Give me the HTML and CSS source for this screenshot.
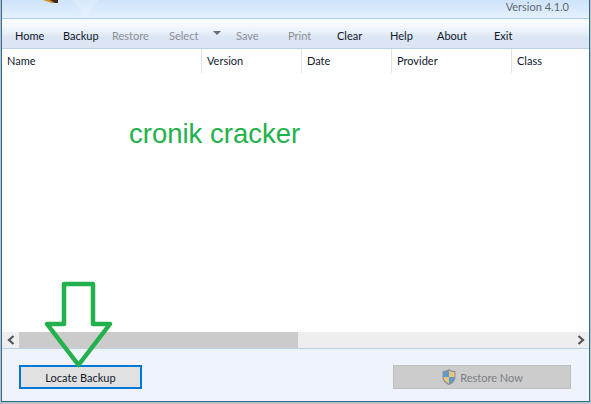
FILE: index.html
```html
<!DOCTYPE html>
<html lang="en">
<head>
    <meta charset="UTF-8">
    <meta name="viewport" content="width=device-width, initial-scale=1.0">
    <title>Backup</title>
    <link rel="stylesheet" href="styles.css">
</head>
<body>
<div class="window">
    <!-- header -->
    <div class="header">
        <svg class="logo" width="110" height="18" viewBox="0 0 110 18">
            <path d="M70 0 L83 17 L97 0 Z" fill="#ffffff" opacity="0.2"/>
            <path d="M41 0 L55 0 L55 3 L50 3 Z" fill="#d98a1e"/>
            <path d="M48 0 L56 0 L56 3 L53 3 Z" fill="#3a2c1a"/>
        </svg>
        <span class="version">Version 4.1.0</span>
    </div>

    <!-- toolbar -->
    <div class="toolbar">
        <span class="tool">Home</span>
        <span class="tool">Backup</span>
        <span class="tool off">Restore</span>
        <span class="tool off">Select</span>
        <span class="tool caret-cell"><span class="caret"></span></span>
        <span class="tool off">Save</span>
        <span class="tool off">Print</span>
        <span class="tool">Clear</span>
        <span class="tool">Help</span>
        <span class="tool">About</span>
        <span class="tool">Exit</span>
    </div>

    <!-- table -->
    <div class="columns">
        <span class="col">Name</span>
        <span class="col">Version</span>
        <span class="col">Date</span>
        <span class="col">Provider</span>
        <span class="col">Class</span>
    </div>
    <div class="list">
        <div class="note">cronik cracker</div>
    </div>
    <div class="scrollbar">
        <span class="arrow">
            <svg width="8" height="10" viewBox="0 0 8 10"><path d="M6.5 1 L2 5 L6.5 9" fill="none" stroke="#555" stroke-width="2.2"/></svg>
        </span>
        <span class="thumb"></span>
        <span class="track"></span>
        <span class="arrow">
            <svg width="8" height="10" viewBox="0 0 8 10"><path d="M1.5 1 L6 5 L1.5 9" fill="none" stroke="#555" stroke-width="2.2"/></svg>
        </span>
    </div>

    <!-- bottom buttons -->
    <div class="footer">
        <button class="btn-locate">Locate Backup</button>
        <button class="btn-restore">
            <svg width="16" height="18" viewBox="0 0 16 18">
                <path d="M8 1 C6 2.5 3.5 3 1.5 3 L1.5 9 C1.5 13 4.5 15.5 8 17 C11.5 15.5 14.5 13 14.5 9 L14.5 3 C12.5 3 10 2.5 8 1 Z" fill="#8a8f96"/>
                <path d="M8 2.5 L8 9 L2.5 9 L2.5 4 C4.5 4 6.5 3.5 8 2.5 Z" fill="#5b9bd0"/>
                <path d="M8 2.5 L8 9 L13.5 9 L13.5 4 C11.5 4 9.5 3.5 8 2.5 Z" fill="#e8c77a"/>
                <path d="M2.5 9 L8 9 L8 15.7 C5 14.4 2.7 12.3 2.5 9 Z" fill="#e8c77a"/>
                <path d="M13.5 9 L8 9 L8 15.7 C11 14.4 13.3 12.3 13.5 9 Z" fill="#5b9bd0"/>
            </svg>
            Restore Now
        </button>
    </div>

    <!-- green arrow drawn on top of the window -->
    <svg class="pointer" width="72" height="88" viewBox="0 0 72 88">
        <path d="M20 3 L49 3 L49 43 L66 43 L34.5 84 L3 43 L20 43 Z" fill="none" stroke="#22b14c" stroke-width="4.5" stroke-linejoin="round"/>
    </svg>
</div>
</body>
</html>
```

FILE: styles.css
```css
html, body {
  margin: 0;
  height: 100%;
  overflow: hidden;
}
body {
  background-color: #b9c2cc;
  font-family: Lato, "Noto Sans", sans-serif;
  font-size: 11px;
  color: #10182a;
}
.window {
  position: relative;
  box-sizing: border-box;
  width: 589px;
  height: 402px;
  margin-left: 1px;
  border: 1px solid #2f6a8f;
  border-top: none;
  display: flex;
  flex-direction: column;
  background-color: #fff;
}
.header {
  position: relative;
  height: 18px;
  border-bottom: 1px solid #a6d0ee;
  background: linear-gradient(#cfe4fa, #e4f0fd);
}
.logo {
  position: absolute;
  left: 0;
  top: 0;
}
.version {
  position: absolute;
  right: 20px;
  top: 0;
  color: #5f6972;
}
.toolbar {
  height: 29px;
  padding-left: 13px;
  display: grid;
  grid-template-columns: 48px 49px 57px 44px 23px 52px 49px 53px 47px 57px 40px;
  align-items: center;
  border-bottom: 1px solid #bcd0ea;
  background: linear-gradient(#fbfdff, #f0f5fc 35%, #dbe5f3 65%, #dbe5f3);
}
.tool {
  padding-top: 3px;
}
.off {
  color: #8b8f95;
}
.caret {
  display: block;
  width: 0;
  height: 0;
  margin-bottom: 4px;
  border-left: 4px solid transparent;
  border-right: 4px solid transparent;
  border-top: 4px solid #666c74;
}
.columns {
  height: 24px;
  display: grid;
  grid-template-columns: 200px 100px 90px 120px 1fr;
  background-color: #fff;
}
.col {
  padding-left: 5px;
  border-right: 1px solid #e3e3e3;
  line-height: 23px;
}
.col:last-child {
  border-right: none;
}
.list {
  flex: 1;
  position: relative;
}
.note {
  position: absolute;
  left: 127px;
  top: 45px;
  font-family: "Liberation Sans", Arial, sans-serif;
  font-size: 27.5px;
  color: #22b14c;
}
.scrollbar {
  height: 16px;
  display: flex;
  background-color: #eeeeee;
}
.arrow {
  width: 17px;
  display: flex;
  align-items: center;
  justify-content: center;
}
.thumb {
  width: 279px;
  background-color: #cbcbcb;
}
.track {
  flex: 1;
}
.footer {
  height: 53px;
  box-sizing: border-box;
  padding: 16px 18px 13px 17px;
  display: flex;
  justify-content: space-between;
  align-items: flex-start;
  border-top: 1px solid #b9d1ea;
  background-color: #eff3fc;
}
.footer button {
  height: 24px;
  font-family: inherit;
  font-size: 11px;
  padding: 0;
}
.btn-locate {
  width: 123px;
  border: 2px solid #0078d7;
  background-color: #e1e1e1;
  color: #10182a;
}
.btn-restore {
  width: 178px;
  border: 1px solid #bfbfbf;
  background-color: #cccccc;
  color: #7a7f85;
  display: flex;
  align-items: center;
  justify-content: center;
  gap: 3px;
}
.pointer {
  position: absolute;
  left: 42px;
  top: 281px;
}
```
